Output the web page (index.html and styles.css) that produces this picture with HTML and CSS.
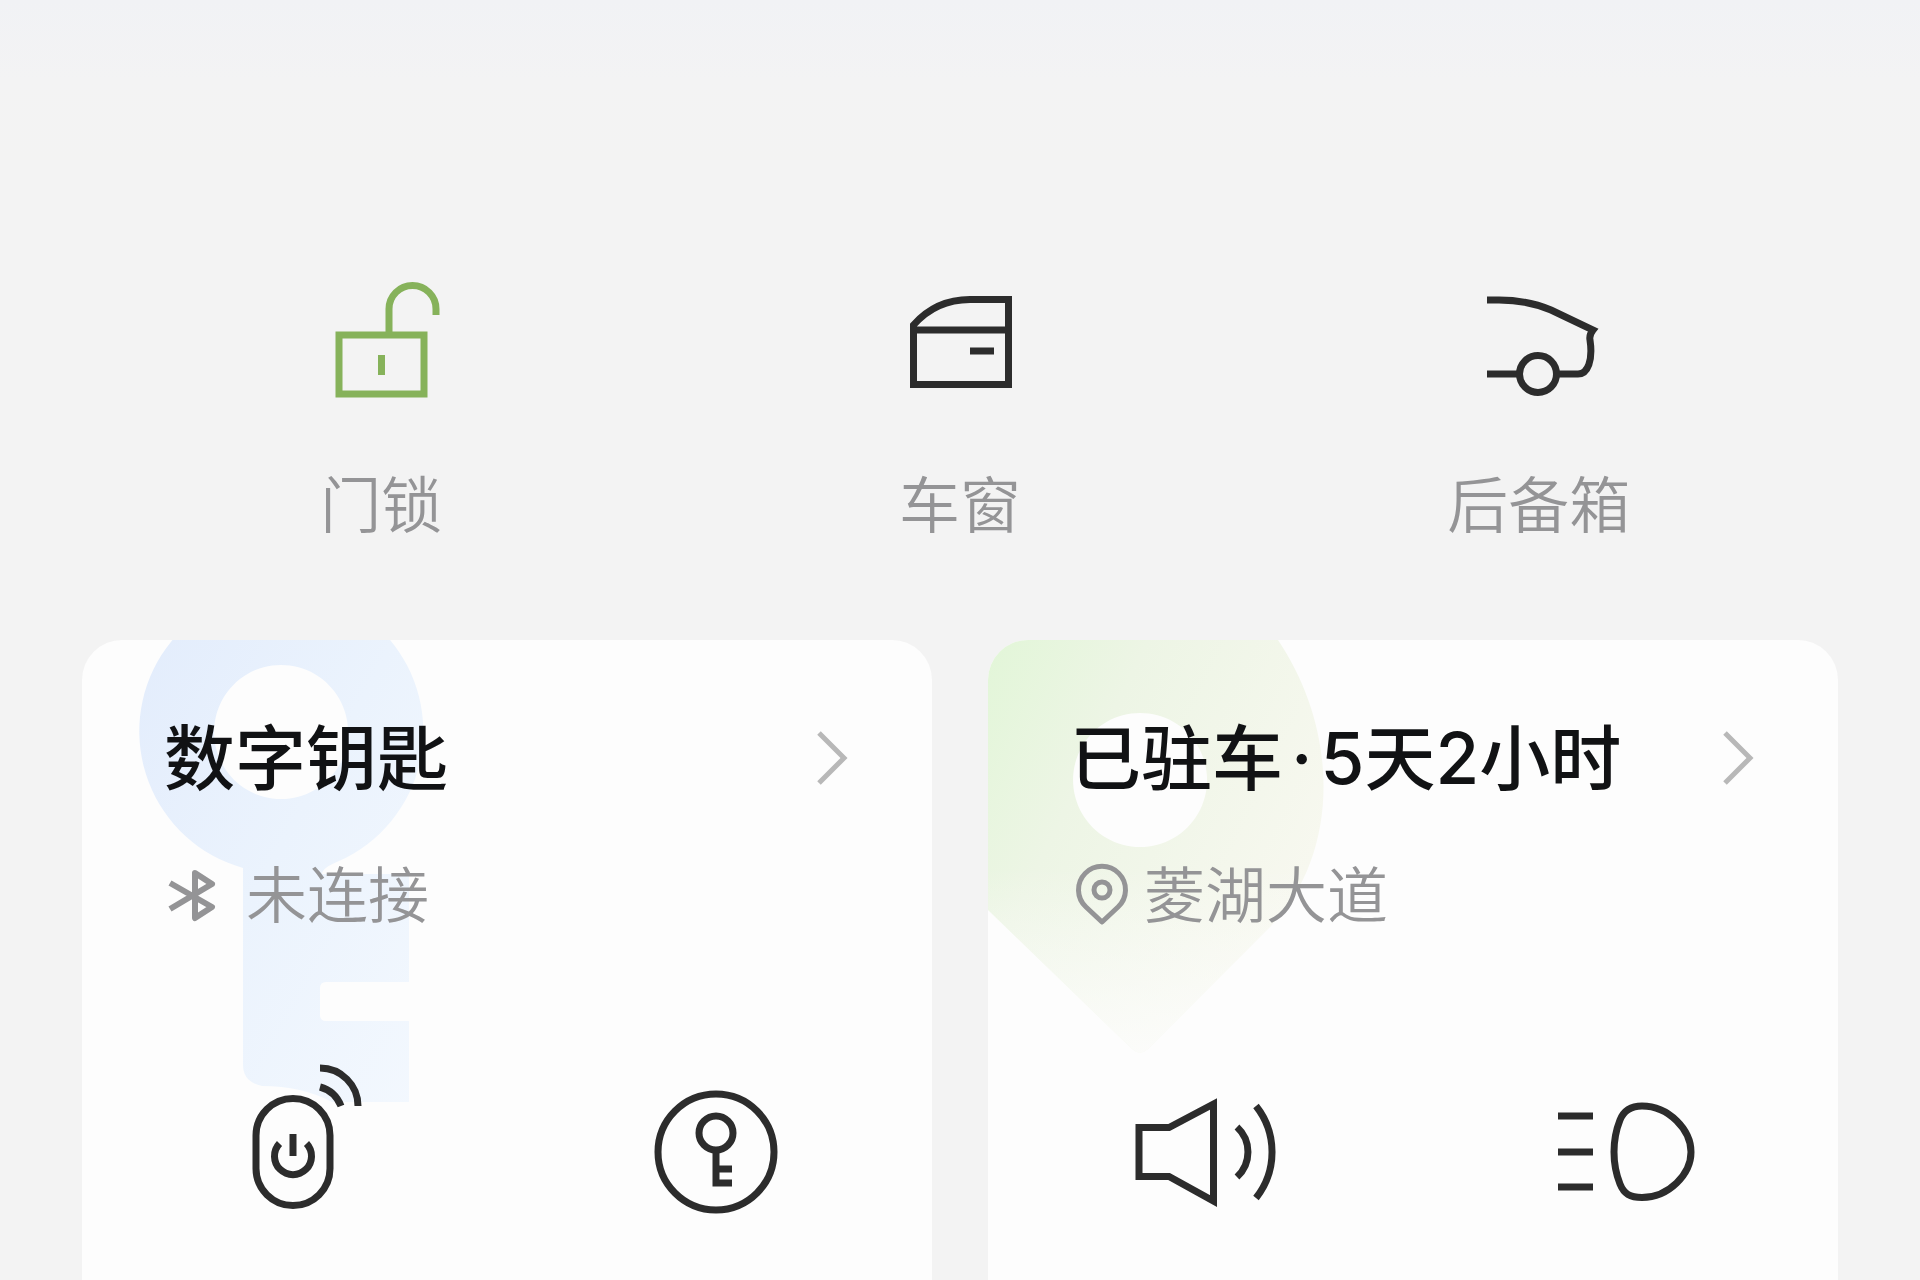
FILE: index.html
```html
<!DOCTYPE html>
<html lang="zh-CN">
<head>
<meta charset="utf-8">
<meta name="viewport" content="width=device-width, initial-scale=1">
<title>车辆控制</title>
<link rel="stylesheet" href="styles.css">
</head>
<body>
<main class="page">
  <section class="controls">
    <button class="control" type="button">
      <svg class="control-icon unlocked" viewBox="0 0 144 144" aria-hidden="true">
        <rect x="30" y="63" width="85" height="59"/>
        <path d="M80 63V37a23.500 23.500 0 0 1 47 0v6M72.500 83v20"/>
      </svg>
      <span>门锁</span>
    </button>
    <button class="control" type="button">
      <svg class="control-icon" viewBox="0 0 144 144" aria-hidden="true">
        <path d="M25.500 53Q48 27.500 82 27.500H120.500V112.500H25.500ZM25.500 58H120.500M82 79h24"/>
      </svg>
      <span>车窗</span>
    </button>
    <button class="control" type="button">
      <svg class="control-icon" viewBox="0 0 144 144" aria-hidden="true">
        <path d="M20 28H32C54 28 70 32 84 38L126 58Q122 63 123 68C126 88 121 102 111 102H90M20 102H52"/>
        <circle cx="71" cy="102" r="18.500"/>
      </svg>
      <span>后备箱</span>
    </button>
  </section>

  <section class="cards">
    <article class="card">
      <svg class="watermark" width="360" height="480" viewBox="0 0 360 480" aria-hidden="true">
        <defs>
          <linearGradient id="key-tint" x1="0" y1="0" x2="1" y2="1">
            <stop offset="0" stop-color="#e2ecfc"/>
            <stop offset="0.500" stop-color="#ebf3fd"/>
            <stop offset="1" stop-color="#f3f8fe"/>
          </linearGradient>
        </defs>
        <path fill="url(#key-tint)" fill-rule="evenodd" d="M161 228A142 142 0 1 1 257 221Q240 228 240 234H327V342H244Q238 342 238 348V375Q238 381 244 381H327V462H250Q220 446 180 446Q161 442 161 425ZM199 25a67 67 0 1 0 .1 0Z"/>
      </svg>
      <a class="card-head" href="#key">
        <h2>数字钥匙</h2>
        <svg class="chevron" viewBox="0 0 32 60" aria-hidden="true"><path d="M1 5L26 30L1 55"/></svg>
      </a>
      <p class="status">
        <svg class="status-icon wide" viewBox="0 0 72 60" aria-hidden="true">
          <path d="M6 17L48 41L31 52V7L48 18L6 43"/>
        </svg>
        <span>未连接</span>
      </p>
      <div class="actions">
        <button class="action" type="button" aria-label="遥控启动">
          <svg viewBox="0 0 180 180" aria-hidden="true">
            <rect x="51" y="36.500" width="74" height="107" rx="37"/>
            <path d="M74.500 81.500A18.500 18.500 0 1 0 101.500 81.500M88 72V94M115 6A38 38 0 0 1 153 44M115 25Q130 29 136 44"/>
          </svg>
        </button>
        <button class="action" type="button" aria-label="钥匙管理">
          <svg viewBox="0 0 180 180" aria-hidden="true">
            <circle cx="86" cy="90" r="58"/>
            <circle cx="86" cy="71" r="17"/>
            <path d="M86 88V121H102M86 107H102"/>
          </svg>
        </button>
      </div>
    </article>

    <article class="card">
      <svg class="watermark" width="360" height="480" viewBox="0 0 360 480" aria-hidden="true">
        <defs>
          <linearGradient id="pin-tint" x1="0" y1="0" x2="1" y2="0.600">
            <stop offset="0" stop-color="#e2f6d8"/>
            <stop offset="0.350" stop-color="#edf5e5"/>
            <stop offset="1" stop-color="#f8f8f0"/>
          </linearGradient>
          <linearGradient id="pin-fade" x1="0" y1="0" x2="0" y2="1">
            <stop offset="0.550" stop-color="#fdfdfd" stop-opacity="0"/>
            <stop offset="1" stop-color="#fdfdfd" stop-opacity="0.800"/>
          </linearGradient>
          <path id="pin-shape" fill-rule="evenodd" d="M0 0H290C352 92 352 215 282 287L160 409Q152 416 144 409L0 270ZM152 73a67 67 0 1 0 .1 0Z"/>
        </defs>
        <use href="#pin-shape" fill="url(#pin-tint)"/>
        <use href="#pin-shape" fill="url(#pin-fade)"/>
      </svg>
      <a class="card-head" href="#location">
        <h2>已驻车<span class="dot">·</span>5天2小时</h2>
        <svg class="chevron" viewBox="0 0 32 60" aria-hidden="true"><path d="M1 5L26 30L1 55"/></svg>
      </a>
      <p class="status">
        <svg class="status-icon" viewBox="0 0 64 60" aria-hidden="true">
          <path d="M32 56L16 41A23.500 23.500 0 1 1 48 41Z"/>
          <circle cx="32" cy="24" r="8"/>
        </svg>
        <span>菱湖大道</span>
      </p>
      <div class="actions">
        <button class="action" type="button" aria-label="鸣笛">
          <svg viewBox="0 0 180 180" aria-hidden="true">
            <path d="M28 65.500H58L102.500 42V139L58 114.500H28ZM126 65A34 34 0 0 1 126 115M145 44A74 74 0 0 1 145 136"/>
          </svg>
        </button>
        <button class="action" type="button" aria-label="闪灯">
          <svg viewBox="0 0 180 180" aria-hidden="true">
            <path d="M106 44C133 44 155 68 155 90C155 112 133 135.500 106 135.500C94 135.500 88 132 84 122C76 102 76 78 84 58C88 48 95 44 106 44ZM22 54H57M22 90H57M22 125H57"/>
          </svg>
        </button>
      </div>
    </article>
  </section>
</main>
</body>
</html>
```
FILE: styles.css
```css
* {
  box-sizing: border-box;
}

body {
  margin: 0;
  background: #f3f3f3;
  color: #111214;
  font-family: Inter, "Noto Sans CJK SC", sans-serif;
}

h2,
p {
  margin: 0;
}

button {
  padding: 0;
  border: 0;
  background: none;
  font: inherit;
  cursor: pointer;
}

svg {
  display: block;
  overflow: visible;
  fill: none;
  stroke: currentColor;
}

.page {
  display: flex;
  flex-direction: column;
  min-height: 100vh;
  padding-top: 272px;
  overflow: hidden;
  background: linear-gradient(#f1f2f5, #f3f3f4 80px, #f3f3f3 160px);
}

.controls {
  display: grid;
  grid-template-columns: repeat(3, 1fr);
  padding: 0 92px;
}

.control {
  display: flex;
  flex-direction: column;
  align-items: center;
  gap: 48px;
  color: #949496;
  font-size: 61px;
  font-weight: 350;
  line-height: 84px;
}

.control-icon {
  width: 144px;
  height: 144px;
  color: #2c2c2c;
  stroke-width: 7;
}

.unlocked {
  color: #86b25a;
}

.cards {
  display: grid;
  flex: 1;
  grid-template-columns: repeat(2, 1fr);
  gap: 56px;
  padding: 92px 82px 0;
}

.card {
  position: relative;
  padding: 72px 82px 36px;
  overflow: hidden;
  border-radius: 40px 40px 0 0;
  background: #fdfdfd;
}

.watermark {
  position: absolute;
  top: 0;
  left: 0;
  stroke: none;
}

.card-head {
  position: relative;
  display: flex;
  align-items: center;
  justify-content: space-between;
  color: inherit;
  text-decoration: none;
}

h2 {
  font-size: 71px;
  font-weight: 500;
  line-height: 92px;
}

.dot {
  padding: 0 8px;
}

.chevron {
  width: 32px;
  height: 60px;
  color: #b8b8b8;
  stroke-width: 5;
}

.status {
  position: relative;
  display: flex;
  align-items: center;
  gap: 10px;
  margin-top: 50px;
  color: #949496;
  font-size: 61px;
  font-weight: 350;
  line-height: 84px;
}

.status-icon {
  width: 64px;
  height: 60px;
  stroke-width: 5;
  stroke-linejoin: round;
}

.wide {
  width: 72px;
  stroke-width: 6;
}

.actions {
  position: relative;
  display: grid;
  grid-template-columns: repeat(2, 1fr);
  margin: 124px -82px 0;
}

.action {
  display: flex;
  justify-content: center;
  color: #2c2c2c;
}

.action svg {
  width: 180px;
  height: 180px;
  stroke-width: 7;
}
```
